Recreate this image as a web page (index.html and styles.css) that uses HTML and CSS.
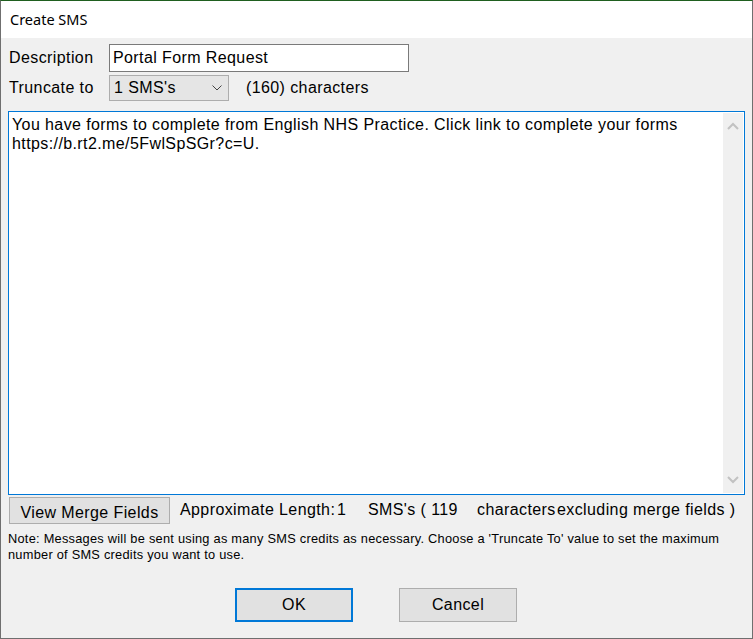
FILE: index.html
```html
<!DOCTYPE html>
<html>
<head>
<meta charset="utf-8">
<title>Create SMS</title>
<link rel="stylesheet" href="styles.css">
</head>
<body>
<div class="window">
  <div class="titlebar">Create SMS</div>
  <div class="content">
    <div class="row row-desc">
      <label class="lbl">Description</label>
      <div class="input">Portal Form Request</div>
    </div>
    <div class="row row-trunc">
      <label class="lbl">Truncate to</label>
      <div class="select">
        <span>1 SMS's</span>
        <svg class="chev" width="10" height="6" viewBox="0 0 10 6"><path d="M0.5 0.5 L5 5 L9.5 0.5" fill="none" stroke="#444" stroke-width="1"/></svg>
      </div>
      <span class="chars">(160) characters</span>
    </div>
    <div class="textarea">
      <div class="ta-text">You have forms to complete from English NHS Practice. Click link to complete your forms<br>https://b.rt2.me/5FwlSpSGr?c=U.</div>
      <div class="scrollbar">
        <svg class="arr" width="12" height="8" viewBox="0 0 12 8"><path d="M1 7 L6 2 L11 7" fill="none" stroke="#c2c2c2" stroke-width="2"/></svg>
        <svg class="arr" width="12" height="8" viewBox="0 0 12 8"><path d="M1 1 L6 6 L11 1" fill="none" stroke="#c2c2c2" stroke-width="2"/></svg>
      </div>
    </div>
    <div class="row row-len">
      <button class="btn btn-merge">View Merge Fields</button>
      <span class="l1">Approximate Length:</span>
      <span class="l2">1</span>
      <span class="l3">SMS's ( 119</span>
      <span class="l4">characters</span>
      <span class="l5">excluding merge fields )</span>
    </div>
    <p class="note">Note: Messages will be sent using as many SMS credits as necessary. Choose a 'Truncate To' value to set the maximum<br>number of SMS credits you want to use.</p>
    <div class="actions">
      <button class="btn btn-ok">OK</button>
      <button class="btn btn-cancel">Cancel</button>
    </div>
  </div>
</div>
</body>
</html>
```
FILE: styles.css
```css
html, body {
  margin: 0;
  padding: 0;
  background: #f0f0f0;
}
.window {
  width: 753px;
  height: 639px;
  box-sizing: border-box;
  border: 1px solid #6f6f6f;
  border-top-color: #1f5f1f;
  background: #f0f0f0;
  font-family: "Liberation Sans", Arial, sans-serif;
  font-size: 16px;
  letter-spacing: 0.4px;
  color: #000;
  display: flex;
  flex-direction: column;
}
.titlebar {
  height: 37px;
  background: #fff;
  font-family: "Noto Sans", "Open Sans", sans-serif;
  font-size: 14.5px;
  letter-spacing: 0;
  line-height: 37px;
  padding-left: 9px;
  flex: none;
}
.content {
  padding: 0 7px 0 7px;
  display: flex;
  flex-direction: column;
}
.row {
  display: flex;
  align-items: center;
}
.lbl {
  width: 100px;
  padding-left: 1px;
  flex: none;
}
.row-desc {
  margin-top: 6px;
  height: 28px;
}
.input {
  width: 300px;
  height: 28px;
  box-sizing: border-box;
  border: 1px solid #7a7a7a;
  background: #fff;
  padding-left: 3px;
  line-height: 26px;
}
.row-trunc {
  margin-top: 3px;
  height: 26px;
}
.select {
  width: 120px;
  height: 26px;
  box-sizing: border-box;
  border: 1px solid #adadad;
  background: #e5e5e5;
  display: flex;
  align-items: center;
  justify-content: space-between;
  padding: 0 6px 0 4px;
}
.chev {
  display: block;
}
.chars {
  margin-left: 17px;
}
.textarea {
  margin-top: 10px;
  height: 384px;
  box-sizing: border-box;
  border: 1px solid #0078d7;
  background: #fff;
  display: flex;
  justify-content: space-between;
}
.ta-text {
  padding: 3px 0 0 3px;
  line-height: 19px;
}
.scrollbar {
  width: 20px;
  margin: 1px 1px 1px 0;
  background: #f0f0f0;
  display: flex;
  flex-direction: column;
  justify-content: space-between;
  align-items: center;
  padding: 9px 0 9px 0;
}
.arr {
  display: block;
}
.row-len {
  margin-top: 2px;
  height: 27px;
  align-items: flex-start;
}
.btn {
  font-family: "Liberation Sans", Arial, sans-serif;
  font-size: 16px;
  letter-spacing: 0.4px;
  color: #000;
  background: #e1e1e1;
  border: 1px solid #adadad;
  margin: 0;
  padding: 0;
  box-sizing: border-box;
}
.btn-merge {
  width: 161px;
  height: 27px;
  margin-left: 1px;
  line-height: 25px;
  padding-top: 2px;
}
.row-len span {
  display: inline-block;
  line-height: 20px;
  margin-top: 3px;
}
.l1 { margin-left: 10px; width: 157px; }
.l2 { width: 31px; }
.l3 { width: 109px; }
.l4 { width: 80px; }
.note {
  margin: 7px 0 0 0;
  font-size: 12.8px;
  letter-spacing: 0.25px;
  line-height: 16px;
}
.actions {
  margin-top: 25px;
  display: flex;
  padding-left: 227px;
  gap: 46px;
}
.btn-ok {
  width: 118px;
  height: 34px;
  border: 2px solid #0078d7;
}
.btn-cancel {
  width: 118px;
  height: 34px;
}
```
